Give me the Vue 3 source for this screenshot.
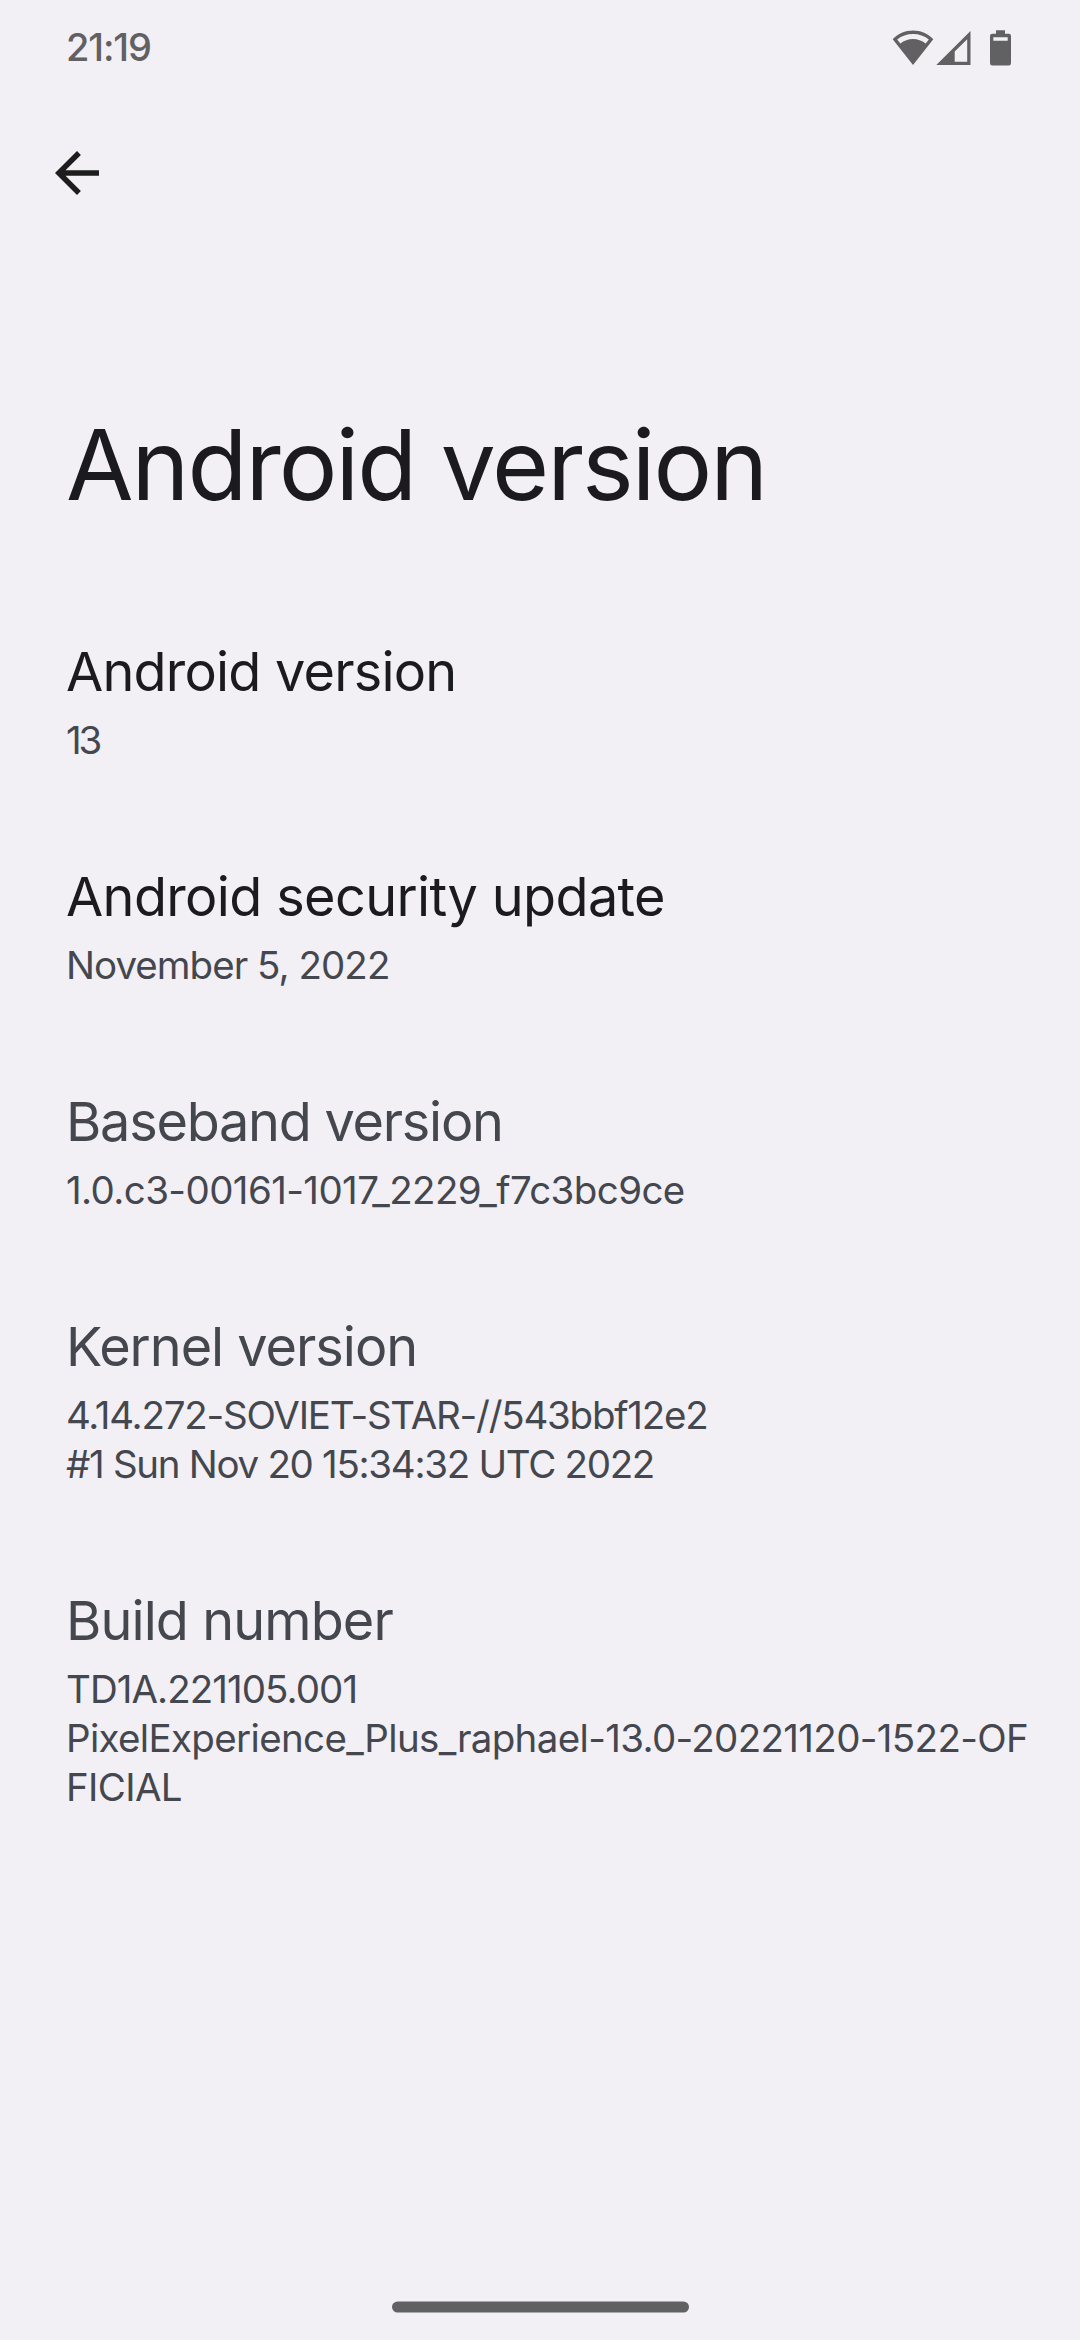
<script setup>
// Each line carries its own tracking, in pixels.
const items = [
  {
    title: 'Android version',
    tracking: -0.8,
    enabled: true,
    lines: [{ text: '13', tracking: -3.2 }],
  },
  {
    title: 'Android security update',
    tracking: -0.64,
    enabled: true,
    lines: [{ text: 'November 5, 2022', tracking: -0.96 }],
  },
  {
    title: 'Baseband version',
    tracking: -1.25,
    enabled: false,
    lines: [{ text: '1.0.c3-00161-1017_2229_f7c3bc9ce', tracking: -0.6 }],
  },
  {
    title: 'Kernel version',
    tracking: -1.02,
    enabled: false,
    lines: [
      { text: '4.14.272-SOVIET-STAR-//543bbf12e2', tracking: -1.24 },
      { text: '#1 Sun Nov 20 15:34:32 UTC 2022', tracking: -1.3 },
    ],
  },
  {
    title: 'Build number',
    tracking: -0.9,
    enabled: false,
    lines: [
      { text: 'TD1A.221105.001', tracking: -0.94 },
      { text: 'PixelExperience_Plus_raphael-13.0-20221120-1522-OF', tracking: -0.66 },
      { text: 'FICIAL', tracking: -0.65 },
    ],
  },
]
</script>

<template>
  <div class="screen">
    <header class="status">
      <span class="clock">21:19</span>
      <div class="indicators">
        <svg class="wifi" width="42" height="36" viewBox="0 0 42 36">
          <path fill-rule="evenodd" d="M21 35 L0.7 9.2 C6 3.600 13 0.500 21 0.500 C29 0.500 36 3.600 41.300 9.200 Z M5.200 9.500 L8.300 13.500 C12 10.600 16.500 9 21 9 C25.500 9 30 10.600 33.700 13.500 L36.800 9.500 C32.300 5.900 27 4 21 4 C15 4 9.700 5.900 5.200 9.500 Z" />
        </svg>
        <svg class="signal" width="35" height="35" viewBox="0 0 35 35">
          <path fill-rule="evenodd" d="M34.500 0 V34 H0.300 Z M31.200 8.300 L18.700 20.600 V30.700 H31.200 Z" />
        </svg>
        <svg class="battery" width="22" height="36" viewBox="0 0 22 36">
          <path fill-rule="evenodd" d="M6 0.300 H15 V3.700 H18.800 Q21 3.700 21 6 V33 Q21 35.500 18.800 35.500 H2.200 Q0 35.500 0 33 V6 Q0 3.700 2.200 3.700 H6 Z M3.300 7.300 V10.700 H17.700 V7.300 Z" />
        </svg>
      </div>
    </header>

    <nav class="toolbar">
      <button class="back" aria-label="Navigate up">
        <svg width="66" height="66" viewBox="0 0 24 24">
          <path d="M20 11H7.830l5.590-5.590L12 4l-8 8 8 8 1.410-1.410L7.830 13H20z" />
        </svg>
      </button>
    </nav>

    <h1 class="heading">Android version</h1>

    <main class="list">
      <section v-for="item in items" :key="item.title" class="item">
        <h2 :class="['title', { muted: !item.enabled }]" :style="{ letterSpacing: item.tracking + 'px' }">{{ item.title }}</h2>
        <p
          v-for="line in item.lines"
          :key="line.text"
          class="line"
          :style="{ letterSpacing: line.tracking + 'px' }"
        >{{ line.text }}</p>
      </section>
    </main>

    <footer class="gesture">
      <svg width="297" height="12" viewBox="0 0 297 12">
        <rect y="0.400" width="297" height="11.200" rx="5.600" />
      </svg>
    </footer>
  </div>
</template>

<style scoped>
.screen {
  box-sizing: border-box;
  display: flex;
  flex-direction: column;
  width: 1080px;
  height: 2340px;
  overflow: hidden;
  background: #f2f0f5;
  font-family: Inter, Roboto, sans-serif;
  color: #1b1b1f;
}
.status {
  box-sizing: border-box;
  display: flex;
  justify-content: space-between;
  height: 96px;
  padding: 0 68px 0 66px;
  color: #616163;
  flex: none;
}
.clock {
  font-size: 38px;
  font-weight: 500;
  line-height: 94px;
  letter-spacing: -1.12px;
}
.indicators {
  display: flex;
  align-items: flex-start;
  padding-top: 30px;
  fill: #616163;
}
.signal { margin: 1px 19px 0 2px; }
.toolbar {
  height: 154px;
  padding: 44px 0 0 44px;
  box-sizing: border-box;
  flex: none;
}
.back {
  display: block;
  width: 66px;
  height: 66px;
  padding: 0;
  border: 0;
  background: none;
}
.back svg {
  display: block;
  fill: #1c1d1c;
}
.heading {
  margin: 155px 0 0 66px;
  font-size: 98px;
  font-weight: 400;
  line-height: 120px;
  letter-spacing: -2px;
  white-space: nowrap;
}
.list {
  display: flex;
  flex-direction: column;
  gap: 99px;
  margin-top: 114px;
  padding-left: 66px;
}
.title {
  margin: 0 0 11px;
  font-size: 54px;
  font-weight: 400;
  line-height: 66px;
  white-space: nowrap;
}
.line {
  margin: 0;
  font-size: 38.5px;
  line-height: 49px;
  white-space: nowrap;
}
.muted,
.line {
  color: #45474f;
}
.gesture {
  display: flex;
  justify-content: center;
  margin-top: auto;
  padding-bottom: 27px;
  fill: #616163;
}
</style>
